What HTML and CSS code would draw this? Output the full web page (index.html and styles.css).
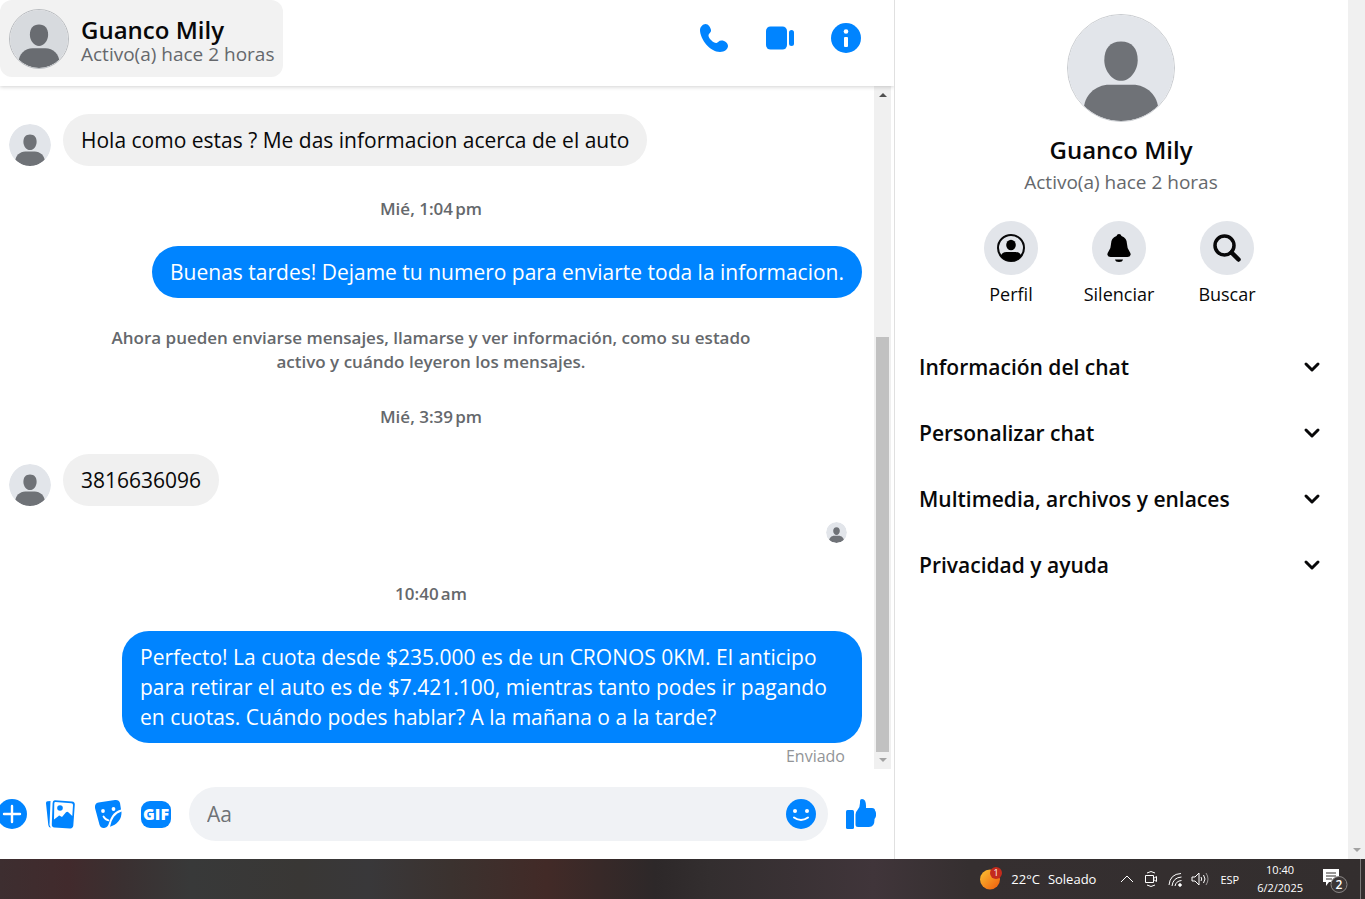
FILE: index.html
```html
<!DOCTYPE html>
<html lang="es">
<head>
    <meta charset="UTF-8">
    <title>Guanco Mily</title>
    <link rel="stylesheet" href="styles.css">
</head>
<body>

    <!-- shared default avatar -->
    <svg class="defs" aria-hidden="true">
        <symbol id="avatar" viewBox="0 0 108 108">
            <clipPath id="round"><circle cx="54" cy="54" r="54"/></clipPath>
            <g clip-path="url(#round)">
                <rect width="108" height="108" fill="#e2e5ea"/>
                <path fill="#6f7277" d="M54 27c-11 0-17 7-17 19 0 11 8 21 17 21s17-10 17-21c0-12-6-19-17-19z"/>
                <path fill="#6f7277" d="M16 108V97c0-15 12-26 26-26h24c14 0 26 11 26 26v11z"/>
            </g>
        </symbol>
    </svg>

    <div class="app">
        <main class="chat">
            <header class="chat-header">
                <a class="contact" href="#">
                    <svg class="avatar avatar-header"><use href="#avatar"/></svg>
                    <span class="contact-text">
                        <span class="contact-name">Guanco Mily</span>
                        <span class="contact-status">Activo(a) hace 2 horas</span>
                    </span>
                </a>
                <div class="chat-actions">
                    <button aria-label="Llamar">
                        <svg viewBox="0 0 30 30" fill="#0084ff"><path d="M1 7C1 4 4 1 6.500 1c3 0 5 3.500 5.500 6 .4 2.500-2.500 3.500-2.500 5.500 0 3 5.500 8 8 7.500 1.300-.3 2.300-2.500 5-2.500C26 17.500 29 20 29 23s-3.500 6-8 6C11 29 1 16 1 7z"/></svg>
                    </button>
                    <button aria-label="Videollamada">
                        <svg viewBox="0 0 30 30" fill="#0084ff"><rect x="1" y="3.500" width="21" height="23" rx="4.500"/><rect x="24" y="7" width="5" height="16" rx="2.500"/></svg>
                    </button>
                    <button aria-label="Información">
                        <svg viewBox="0 0 30 30"><circle cx="15" cy="15" r="15" fill="#0084ff"/><circle cx="15" cy="8.500" r="2.300" fill="#fff"/><rect x="13" y="14" width="4" height="10" rx="1" fill="#fff"/></svg>
                    </button>
                </div>
            </header>

            <div class="thread">
                <div class="messages">
                    <div class="row">
                        <svg class="avatar avatar-message"><use href="#avatar"/></svg>
                        <p class="bubble">Hola como estas ? Me das informacion acerca de el auto</p>
                    </div>
                    <time class="timestamp">Mié, 1:04&#8239;pm</time>
                    <div class="row row-sent">
                        <p class="bubble bubble-sent">Buenas tardes! Dejame tu numero para enviarte toda la informacion.</p>
                    </div>
                    <p class="notice">Ahora pueden enviarse mensajes, llamarse y ver información, como su estado activo y cuándo leyeron los mensajes.</p>
                    <time class="timestamp">Mié, 3:39&#8239;pm</time>
                    <div class="row">
                        <svg class="avatar avatar-message"><use href="#avatar"/></svg>
                        <p class="bubble">3816636096</p>
                    </div>
                    <div class="seen"><svg class="avatar avatar-seen"><use href="#avatar"/></svg></div>
                    <time class="timestamp">10:40&#8239;am</time>
                    <div class="row row-sent">
                        <p class="bubble bubble-sent">Perfecto! La cuota desde $235.000 es de un CRONOS 0KM. El anticipo para retirar el auto es de $7.421.100, mientras tanto podes ir pagando en cuotas. Cuándo podes hablar? A la mañana o a la tarde?</p>
                    </div>
                    <div class="sent-status">Enviado</div>
                </div>
                <div class="scrollbar">
                    <span class="arrow arrow-up"></span>
                    <span class="thumb"></span>
                    <span class="arrow arrow-down"></span>
                </div>
            </div>

            <form class="composer">
                <button type="button" class="plus" aria-label="Más">
                    <svg viewBox="0 0 30 30"><circle cx="15" cy="15" r="15" fill="#0084ff"/><path d="M15 7v16M7 15h16" stroke="#fff" stroke-width="2.400" stroke-linecap="round"/></svg>
                </button>
                <button type="button" aria-label="Adjuntar foto">
                    <svg viewBox="0 0 30 30">
                        <path fill="#0084ff" d="M5.500 2L2.600 2.200Q.8 2.400 1 4.300L3.300 26q.3 2.500 2.500 2.800L4.500 26z"/>
                        <path fill="#0084ff" d="M10 1.200l17 1.200q3 .3 2.800 3.200l-1.500 21q-.3 3-3.300 2.800L9.500 28.500q-3-.3-2.700-3.300L7.600 4Q7.800 1 10 1.200z"/>
                        <path fill="#fff" d="M10.500 3l15.800 1.200q1.800.1 1.700 1.800l-.7 11-4.300-4q-1-.8-2 .3L17 18l-2.300-1.300q-.8-.3-1.400.5L9 20.500 9.300 4.300q0-1.300 1.200-1.300z"/>
                        <circle cx="15" cy="9" r="2.800" fill="#0084ff"/>
                    </svg>
                </button>
                <button type="button" aria-label="Elegir sticker">
                    <svg viewBox="0 0 30 30">
                        <path fill="#0084ff" d="M5.500 3.500L22 1q4-.5 5 3l1 6.500q-6 1.500-9 6.500-2 3-3 7-1 4-4 4.800-4 1-5.500-3L2 9q-.5-5 3.500-5.500z"/>
                        <path fill="#0084ff" d="M28.500 12.500q.3 6-3 9.800-3.500 4.200-8.500 5.400 1-6 4-10 3-4 7.500-5.200z"/>
                        <circle cx="10" cy="12" r="1.900" fill="#fff"/><circle cx="20.500" cy="10" r="1.900" fill="#fff"/>
                        <path d="M10.500 17.500q2 3.500 5 3.800" fill="none" stroke="#fff" stroke-width="1.800" stroke-linecap="round"/>
                    </svg>
                </button>
                <button type="button" class="gif">GIF</button>
                <div class="text-box">
                    <input type="text" placeholder="Aa" aria-label="Mensaje">
                    <button type="button" aria-label="Emoji">
                        <svg viewBox="0 0 30 30"><circle cx="15" cy="15" r="15" fill="#0084ff"/><circle cx="9" cy="12" r="2" fill="#fff"/><circle cx="21" cy="12" r="2" fill="#fff"/><path d="M8 18.500q7 5 14 0" fill="none" stroke="#fff" stroke-width="2" stroke-linecap="round"/></svg>
                    </button>
                </div>
                <button type="button" aria-label="Me gusta">
                    <svg viewBox="0 0 30 30" fill="#0084ff"><rect y="11" width="8" height="19" rx="1.500"/><path d="M9.500 15.500q0-2.500 2-4.500 2.500-2.500 2.500-7V2q0-2 2-2 4.500 0 4 9h6q3 0 3 2.500 1.500 2 1 5.500-.5 2-1.500 3 .3 8-5.500 8H12q-2.500 0-2.500-2.500z"/></svg>
                </button>
            </form>
        </main>

        <aside class="sidebar">
            <div class="details">
                <svg class="avatar avatar-profile"><use href="#avatar"/></svg>
                <h1>Guanco Mily</h1>
                <p class="contact-status">Activo(a) hace 2 horas</p>

                <div class="shortcuts">
                    <button>
                        <span class="circle">
                            <svg viewBox="0 0 28 28"><clipPath id="small"><circle cx="14" cy="14" r="13"/></clipPath><circle cx="14" cy="14" r="13" fill="none" stroke="#080809" stroke-width="2"/><ellipse cx="14" cy="11" rx="4.800" ry="5.200"/><path clip-path="url(#small)" d="M3.500 28v-5q1-5 6-5h9q5 0 6 5v5z"/></svg>
                        </span>
                        Perfil
                    </button>
                    <button>
                        <span class="circle">
                            <svg viewBox="0 0 28 28"><path d="M14 0q2 0 2.500 2Q22 4 22 10q0 4 2.500 7.500Q26 19.500 25.500 21q-.5 2-3 2h-17q-2.500 0-3-2-.5-1.500 1-3.500Q6 14 6 10q0-6 5.500-8Q12 0 14 0zM10 25.500h8Q17.500 28 14 28t-4-2.500z"/></svg>
                        </span>
                        Silenciar
                    </button>
                    <button>
                        <span class="circle">
                            <svg viewBox="0 0 28 28" fill="none" stroke="#080809"><circle cx="11.500" cy="11.500" r="9.500" stroke-width="3.500"/><path d="M18.500 18.500l7 7" stroke-width="4.500" stroke-linecap="round"/></svg>
                        </span>
                        Buscar
                    </button>
                </div>

                <div class="sections">
                    <button>Información del chat <svg viewBox="0 0 18 18"><path d="M3 6l6 6 6-6"/></svg></button>
                    <button>Personalizar chat <svg viewBox="0 0 18 18"><path d="M3 6l6 6 6-6"/></svg></button>
                    <button>Multimedia, archivos y enlaces <svg viewBox="0 0 18 18"><path d="M3 6l6 6 6-6"/></svg></button>
                    <button>Privacidad y ayuda <svg viewBox="0 0 18 18"><path d="M3 6l6 6 6-6"/></svg></button>
                </div>
            </div>
            <div class="page-scrollbar"><span class="arrow arrow-down"></span></div>
        </aside>
    </div>

    <footer class="taskbar">
        <button class="weather">
            <svg viewBox="0 0 24 24">
                <defs><linearGradient id="sun" x1="0" y1="0" x2="1" y2="1"><stop offset="0" stop-color="#fcc433"/><stop offset="1" stop-color="#ee5a0c"/></linearGradient></defs>
                <circle cx="11" cy="12.500" r="10" fill="url(#sun)"/><circle cx="17" cy="6" r="6" fill="#c42b1c"/>
                <text x="17" y="9" fill="#fff" font-size="9" text-anchor="middle">1</text>
            </svg>
            <span>22°C</span>
            <span>Soleado</span>
        </button>
        <div class="tray">
            <button aria-label="Mostrar iconos ocultos"><svg viewBox="0 0 16 16"><path d="M2 11l6-6 6 6"/></svg></button>
            <button aria-label="Reunirse ahora"><svg viewBox="0 0 16 16"><path d="M4 2q4-3 8 0M4 14q4 3 8 0M2.500 4.500h8v7h-8zM10.500 7.500l3-2v5l-3-2"/></svg></button>
            <button aria-label="Red">
                <svg viewBox="0 0 16 16"><path d="M2 14Q3 3 14 2.500M5 15Q6 6.500 14.500 6M8 15Q9 10 14.500 9.500"/><circle cx="13" cy="14" r="1.300" fill="#fff"/></svg>
            </button>
            <button aria-label="Volumen"><svg class="volume" viewBox="0 0 18 16"><path d="M1 6h3l4-4v12l-4-4H1zM10 6q1.500 2 0 4M12.500 4q3 4 0 8"/><path opacity=".5" d="M15 2q4 6 0 12"/></svg></button>
        </div>
        <button class="language">ESP</button>
        <button class="clock"><span>10:40</span><span>6/2/2025</span></button>
        <button class="notifications" aria-label="Notificaciones">
            <svg viewBox="0 0 26 28">
                <path fill="#fff" d="M1 4h16v13H7l-3 4v-4H1z"/><path d="M4 8h10M4 11h10M4 14h6" stroke="#332e2d"/>
                <circle cx="17" cy="19.500" r="8" fill="#3b3636" stroke="#8b8786"/>
                <text x="17" y="24" fill="#fff" font-size="12" font-weight="600" text-anchor="middle">2</text>
            </svg>
        </button>
    </footer>

</body>
</html>
```
FILE: styles.css
```css
* {
    box-sizing: border-box;
}

body {
    margin: 0;
    height: 100vh;
    display: flex;
    flex-direction: column;
    overflow: hidden;
    font-family: 'Open Sans', 'Segoe UI', sans-serif;
    color: #080809;
    background: #fff;
}

p, h1 {
    margin: 0;
}

button {
    padding: 0;
    border: none;
    background: none;
    font-family: inherit;
    color: inherit;
    cursor: pointer;
}

svg {
    display: block;
    flex-shrink: 0;
}

.defs {
    position: absolute;
    width: 0;
    height: 0;
}

.app {
    flex: 1;
    min-height: 0;
    display: flex;
}

/* chat column */
.chat {
    flex: 1;
    min-width: 0;
    display: flex;
    flex-direction: column;
    border-right: 1px solid #e0e0e0;
}

.chat-header {
    height: 86px;
    display: flex;
    align-items: flex-start;
    justify-content: space-between;
    padding-right: 33px;
    box-shadow: 0 1px 4px rgba(0, 0, 0, 0.18);
    clip-path: inset(0 0 -8px 0);
    z-index: 1;
}

.contact {
    display: flex;
    align-items: center;
    gap: 12px;
    height: 77px;
    padding: 0 9px;
    border-radius: 12px;
    background: #f2f2f2;
    color: inherit;
    text-decoration: none;
}

.avatar {
    border-radius: 50%;
}

.avatar-header {
    width: 60px;
    height: 60px;
    border: 1px solid #c3c6ca;
    filter: brightness(0.95);
}

.contact-text {
    display: flex;
    flex-direction: column;
    padding-top: 5px;
}

.contact-name {
    font-size: 24px;
    line-height: 26px;
    font-weight: 600;
}

.contact-status {
    font-size: 19px;
    line-height: 24px;
    color: #65686c;
}

.contact .contact-status {
    line-height: 22px;
}

.chat-actions {
    display: flex;
    gap: 36px;
    padding-top: 23px;
}

.chat-actions svg,
.composer svg {
    width: 30px;
    height: 30px;
}

.thread {
    flex: 1;
    min-height: 0;
    display: flex;
    padding-right: 3px;
}

.messages {
    flex: 1;
    padding: 28px 12px 0 9px;
    overflow: hidden;
}

.row {
    display: flex;
    align-items: flex-end;
    gap: 12px;
}

.row-sent {
    justify-content: flex-end;
}

.avatar-message {
    width: 42px;
    height: 42px;
}

.bubble {
    max-width: 740px;
    padding: 11px 18px;
    border-radius: 27px;
    background: #f0f0f0;
    font-size: 21px;
    line-height: 30px;
}

.bubble-sent {
    background: #0084ff;
    color: #fff;
}

.timestamp,
.notice {
    display: block;
    font-size: 17px;
    line-height: 24px;
    font-weight: 600;
    text-align: center;
    color: #65686c;
}

.timestamp {
    padding: 31px 9px 25px 0;
}

.notice {
    padding: 28px 99px 0 90px;
}

.seen {
    display: flex;
    justify-content: flex-end;
    padding: 16px 15px 8px 0;
}

.avatar-seen {
    width: 21px;
    height: 21px;
}

.sent-status {
    padding-right: 17px;
    font-size: 16px;
    line-height: 26px;
    text-align: right;
    color: #929497;
}

/* scrollbars */
.scrollbar,
.page-scrollbar {
    width: 17px;
    display: flex;
    flex-direction: column;
    align-items: center;
    background: #f0f0f0;
}

.thumb {
    width: 13px;
    flex: 1;
    margin: 240px 0 6px;
    background: #c1c1c1;
}

.arrow {
    border: 4px solid transparent;
}

.arrow-up {
    margin-top: 3px;
    border-bottom-color: #505050;
}

.arrow-down {
    margin-bottom: 3px;
    border-top-color: #a3a3a3;
}

.page-scrollbar {
    justify-content: flex-end;
}

/* message box */
.composer {
    height: 90px;
    display: flex;
    align-items: center;
    gap: 18px;
    padding-right: 18px;
}

.plus {
    margin-left: -3px;
}

.gif {
    width: 30px;
    height: 27px;
    border-radius: 9px;
    background: #0084ff;
    color: #fff;
    font-size: 16px;
    line-height: 27px;
    font-weight: 800;
}

.text-box {
    flex: 1;
    height: 54px;
    display: flex;
    align-items: center;
    padding: 0 12px 0 18px;
    border-radius: 27px;
    background: #f0f2f5;
}

.text-box input {
    flex: 1;
    min-width: 0;
    padding: 0;
    border: none;
    outline: none;
    background: none;
    font-family: inherit;
    font-size: 21px;
}

.text-box input::placeholder {
    color: #6f7276;
}

/* right panel */
.sidebar {
    width: 470px;
    display: flex;
}

.details {
    flex: 1;
    display: flex;
    flex-direction: column;
    align-items: center;
    padding: 14px 1px 0 0;
}

.avatar-profile {
    width: 108px;
    height: 108px;
    border: 1px solid #c8cbcf;
}

.details h1 {
    margin-top: 12px;
    font-size: 24px;
    line-height: 32px;
    font-weight: 600;
}

.details .contact-status {
    margin-top: 4px;
}

.shortcuts {
    display: grid;
    grid-template-columns: repeat(3, 108px);
    padding: 27px 4px 0 0;
}

.shortcuts button {
    display: flex;
    flex-direction: column;
    align-items: center;
    gap: 7px;
    font-size: 18px;
    line-height: 24px;
}

.circle {
    width: 54px;
    height: 54px;
    display: flex;
    align-items: center;
    justify-content: center;
    border-radius: 50%;
    background: #e2e5ea;
}

.circle svg {
    width: 28px;
    height: 28px;
}

.sections {
    align-self: stretch;
    margin-top: 28px;
    padding: 0 26px 0 24px;
}

.sections button {
    width: 100%;
    height: 66px;
    display: flex;
    align-items: center;
    justify-content: space-between;
    font-size: 21px;
    font-weight: 600;
}

.sections svg {
    width: 18px;
    height: 18px;
    fill: none;
    stroke: #080809;
    stroke-width: 3;
    stroke-linecap: round;
    stroke-linejoin: round;
}

/* taskbar */
.taskbar {
    height: 40px;
    display: flex;
    align-items: center;
    justify-content: flex-end;
    padding-right: 4px;
    background: linear-gradient(to right, #3d2e30, #412a2c 5%, #3a3031 9%, #383939 14%, #393735 22%, #39383a 27%, #3b322f 33%, #422a27 40%, #2d2829 48%, #332e2f 52%, #40353a 64%, #352f30 71%, #332e2e);
    color: #fff;
}

.weather {
    display: flex;
    align-items: center;
    gap: 8px;
    margin-right: 23px;
    font-size: 13px;
}

.weather svg {
    width: 24px;
    height: 24px;
}

.tray {
    display: flex;
    align-items: center;
    gap: 8px;
    margin-right: 11px;
}

.tray svg {
    width: 16px;
    height: 16px;
    fill: none;
    stroke: #fff;
}

.tray .volume {
    width: 18px;
}

.language {
    font-size: 11px;
}

.clock {
    display: flex;
    flex-direction: column;
    align-items: center;
    margin-left: 18px;
    font-size: 11px;
    line-height: 18px;
}

.notifications {
    height: 40px;
    margin-left: 19px;
    padding-right: 12px;
    border-right: 1px solid #7b7878;
}

.notifications svg {
    width: 26px;
    height: 28px;
}
```
